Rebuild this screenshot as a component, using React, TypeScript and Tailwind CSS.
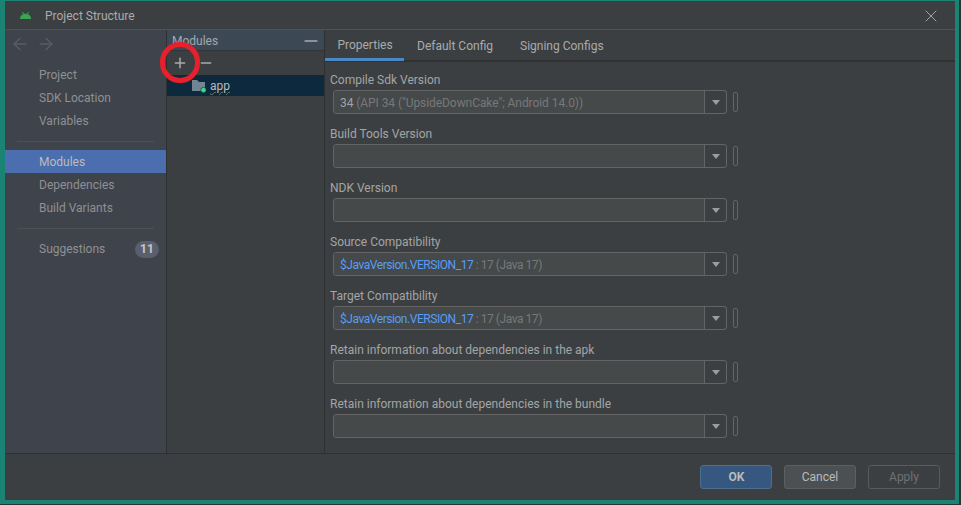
import { ArrowLeft, ArrowRight, Minus, Plus, X } from "lucide-react";

const font = "font-['Roboto',sans-serif]";

const navTop = ["Project", "SDK Location", "Variables"];
const navMiddle = ["Modules", "Dependencies", "Build Variants"];

const fields = [
  { label: "Compile Sdk Version", value: "34", extra: ' (API 34 ("UpsideDownCake"; Android 14.0))', plain: true },
  { label: "Build Tools Version" },
  { label: "NDK Version" },
  { label: "Source Compatibility", value: "$JavaVersion.VERSION_17", extra: " : 17 (Java 17)" },
  { label: "Target Compatibility", value: "$JavaVersion.VERSION_17", extra: " : 17 (Java 17)" },
  { label: "Retain information about dependencies in the apk" },
  { label: "Retain information about dependencies in the bundle" },
];

const AndroidLogo = () => (
  <svg width="11" height="7" viewBox="0 0 11 7" className="block">
    <path d="M0 7C0 4 2.200 1.800 5.500 1.800S11 4 11 7z" fill="#3ba450" />
    <path d="M2.500 0l1 2M8.500 0l-1 2" stroke="#3ba450" strokeWidth="1" />
  </svg>
);

const NavItem = ({ text, active }: { text: string; active?: boolean }) => (
  <div className={`h-[23px] pl-[34px] flex items-center text-[12px] ${active ? "bg-[#4b6eaf] text-[#bbbbbb]" : "text-[#8f9193]"}`}>
    {text}
  </div>
);

const Field = ({ label, value, extra, plain }: { label: string; value?: string; extra?: string; plain?: boolean }) => (
  <div className="h-[54px] pl-[5px]">
    <div className="h-[18px] mb-px flex items-center text-[12px] text-[#a3a5a6] whitespace-nowrap">{label}</div>
    <div className="flex items-center pl-[3px]">
      <div className="w-[394px] h-[24px] flex rounded-[3px] border border-[#646464] overflow-hidden">
        <div className={`flex-1 bg-[#45494a] pl-[6px] pt-px flex items-center text-[12px] whitespace-nowrap ${plain ? "tracking-[-0.07px]" : "tracking-[-0.45px]"}`}>
          <span className={plain ? "text-[#a0a2a3]" : "text-[#589df6]"}>{value}</span>
          <span className="whitespace-pre text-[#787878]">{extra}</span>
        </div>
        <div className="w-[22px] border-l border-[#646464] flex items-center justify-center">
          <div className="w-0 h-0 border-l-[4px] border-r-[4px] border-t-[5px] border-l-transparent border-r-transparent border-t-[#9a9c9d]" />
        </div>
      </div>
      <div className="ml-[6px] w-[5px] h-[20px] rounded-[2px] border border-[#646464]" />
    </div>
  </div>
);

const DialogButton = ({ text, kind }: { text: string; kind: "ok" | "normal" | "off" }) => {
  const styles = {
    ok: "bg-[#365880] border-[#4c708c] text-[#bbbbbb] font-bold pl-px",
    normal: "bg-[#4c5052] border-[#5e6060] text-[#bbbbbb]",
    off: "bg-[#3c3f41] border-[#585b5d] text-[#6f7173]",
  };
  return (
    <div className={`w-[72px] h-[24px] rounded-[3px] border flex items-center justify-center text-[12px] ${styles[kind]}`}>
      {text}
    </div>
  );
};

export default function App() {
  return (
    <div className={`relative w-[961px] h-[505px] bg-[#2f3233] pt-[1px] pl-[4px] pr-[2px] pb-[1px] overflow-hidden ${font}`}>
      <div className="absolute inset-0 right-[2px] bottom-[1px] bg-[#1a8373]" />
      <div className="relative ml-px mr-[4px] h-[499px] bg-[#3c3f41] flex flex-col">
        {/* title bar */}
        <div className="h-[29px] shrink-0 flex items-center pt-px border-b border-[#505354]">
          <div className="ml-[15px] w-[25px]">
            <AndroidLogo />
          </div>
          <span className="text-[12px] text-[#a9abac]">Project Structure</span>
          <X size={20} strokeWidth={1.2} className="ml-auto mr-[14px] text-[#a0a2a3]" />
        </div>

        <div className="flex h-[424px] shrink-0 border-b border-[#2f3031]">
          {/* sidebar */}
          <div className="w-[161px] shrink-0 bg-[#3e434c]">
            <div className="h-[28px] flex items-center pl-[5px] gap-[6px] text-[#595d63]">
              <ArrowLeft size={20} strokeWidth={1.7} />
              <ArrowRight size={20} strokeWidth={1.7} />
            </div>
            <div className="pt-[5px]">
              {navTop.map((t) => (
                <NavItem key={t} text={t} />
              ))}
            </div>
            <div className="mx-[12px] mt-[9px] mb-[8px] h-px bg-[#4f5052]" />
            {navMiddle.map((t) => (
              <NavItem key={t} text={t} active={t === "Modules"} />
            ))}
            <div className="mx-[12px] mt-[9px] mb-[11px] h-px bg-[#4f5052]" />
            <div className="flex items-center pl-[34px] pr-[7px] text-[12px] text-[#8f9193]">
              Suggestions
              <span className="ml-auto w-[24px] h-[17px] rounded-full bg-[#5a5f6e] text-[#c5c7c9] font-bold flex items-center justify-center">11</span>
            </div>
          </div>

          {/* modules list */}
          <div className="w-[159px] shrink-0 border-l border-r border-[#2f3031]">
            <div className="h-[20px] pt-px bg-[#3d4855] flex items-center pl-[5px] pr-[3px] text-[12px] text-[#a3a9b0]">
              Modules
              <Minus size={20} strokeWidth={2} className="ml-auto text-[#a9abac]" />
            </div>
            <div className="h-[25px] border-t border-[#323435] flex items-center pl-[5px] gap-[10px] text-[#a9abac]">
              <Plus size={16} strokeWidth={2.2} />
              <Minus size={16} strokeWidth={2.2} />
            </div>
            <div className="h-[21px] bg-[#0d293e] flex items-center pl-[25px] text-[12px] text-[#bbbbbb]">
              <svg width="15" height="14" viewBox="0 0 15 14" className="block">
                <path d="M0 1h5l2 2h6v9H0z" fill="#728592" />
                <circle cx="11.500" cy="11" r="2.700" fill="#3ddc84" stroke="#0d293e" strokeWidth="0.600" />
              </svg>
              <span className="ml-[3px] underline decoration-wavy decoration-[#7a7a5a] decoration-[0.5px]">app</span>
            </div>
          </div>

          {/* properties */}
          <div className="flex-1 min-w-0">
            <div className="h-[32px] flex border-b-2 border-[#313233] text-[12px] text-[#a9abac]">
              <div className="w-[79px] h-[31px] pt-[2px] pl-px flex items-center justify-center border-b-[3px] border-[#4a88c7]">Properties</div>
              <div className="ml-[13px] pt-px flex items-center">Default Config</div>
              <div className="ml-[27px] pt-px flex items-center">Signing Configs</div>
            </div>
            <div className="pt-[9px]">
              {fields.map((f) => (
                <Field key={f.label} {...f} />
              ))}
            </div>
          </div>
        </div>

        {/* footer */}
        <div className="flex-1 flex items-center justify-end gap-[12px] pr-[15px] pb-[1px]">
          <DialogButton text="OK" kind="ok" />
          <DialogButton text="Cancel" kind="normal" />
          <DialogButton text="Apply" kind="off" />
        </div>
      </div>

      {/* red annotation circle */}
      <div className="absolute left-[160px] top-[42px] w-[40px] h-[41px] rounded-full border-[5px] border-[#e8202c]" />
    </div>
  );
}
